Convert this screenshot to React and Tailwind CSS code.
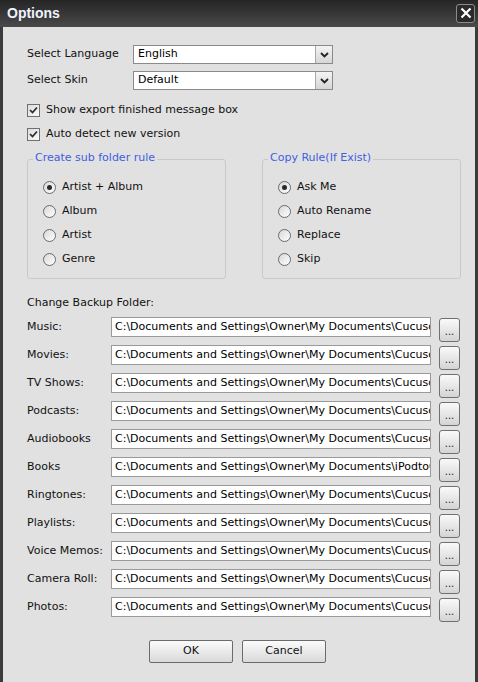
import React from "react";

const FONT = { fontFamily: '"DejaVu Sans", Verdana, sans-serif' };

function Chevron() {
  return (
    <svg width="9" height="6" viewBox="0 0 9 6">
      <path d="M1 1 L4.5 4.5 L8 1" stroke="#222" strokeWidth="1.8" fill="none" />
    </svg>
  );
}

function Select({ value }) {
  return (
    <div className="w-[200px] h-[19px] bg-white border border-[#8a8a8a] flex items-stretch">
      <div className="flex-1 flex items-center pl-[4px] text-[11px] text-black">{value}</div>
      <div className="w-[17px] bg-gradient-to-b from-[#f4f4f4] to-[#d6d6d6] border-l border-[#a8a8a8] flex items-center justify-center">
        <Chevron />
      </div>
    </div>
  );
}

function Checkbox({ label }) {
  return (
    <div className="h-[16px] flex items-center gap-[6px]">
      <div className="w-[13px] h-[13px] border border-[#6f6f6f] bg-gradient-to-br from-[#dcdcdc] to-[#fbfbfb] flex items-center justify-center">
        <svg width="9" height="8" viewBox="0 0 9 8">
          <path d="M1 4 L3.5 6.5 L8 1.5" stroke="#2a2a2a" strokeWidth="1.7" fill="none" />
        </svg>
      </div>
      <span className="text-[11px] text-[#111]">{label}</span>
    </div>
  );
}

function Radio({ label, checked }) {
  return (
    <div className="h-[24px] flex items-center gap-[6px]">
      <div className="w-[13px] h-[13px] rounded-full border border-[#6a6a6a] bg-gradient-to-br from-[#d8d8d8] to-[#ffffff] flex items-center justify-center">
        {checked && <div className="w-[5px] h-[5px] rounded-full bg-[#2a2a2a]" />}
      </div>
      <span className="text-[11px] text-[#111]">{label}</span>
    </div>
  );
}

function Group({ title, items, width, indent }) {
  return (
    <div className="relative h-[128px]" style={{ width }}>
      <div className="absolute left-0 right-0 top-[8px] bottom-0 border border-[#c9c9c9] rounded-[3px]" />
      <div className="absolute left-[6px] top-0 h-[14px] px-[2px] bg-[#e1e1e1] flex items-center text-[11px] text-[#3d5fe0]">
        {title}
      </div>
      <div className="absolute top-[24px] flex flex-col" style={{ left: indent }}>
        {items.map((it, i) => (
          <Radio key={it} label={it} checked={i === 0} />
        ))}
      </div>
    </div>
  );
}

const PATH = "C:\\Documents and Settings\\Owner\\My Documents\\CucusoftiPodtoComputerConverter";
const BOOKS = "C:\\Documents and Settings\\Owner\\My Documents\\iPodtoComputerConverter";

const rows = [
  ["Music:", PATH],
  ["Movies:", PATH],
  ["TV Shows:", PATH],
  ["Podcasts:", PATH],
  ["Audiobooks", PATH],
  ["Books", BOOKS],
  ["Ringtones:", PATH],
  ["Playlists:", PATH],
  ["Voice Memos:", PATH],
  ["Camera Roll:", PATH],
  ["Photos:", PATH],
];

function DotsButton() {
  return (
    <div className="mt-[5px] ml-[8px] w-[21px] h-[24px] rounded-[3px] border border-[#707070] bg-gradient-to-b from-[#fafafa] to-[#d4d4d4] flex items-end justify-center pb-[4px]">
      <span className="text-[10px] leading-[10px] text-[#222]">...</span>
    </div>
  );
}

function Btn({ label }) {
  return (
    <div className="w-[84px] h-[23px] rounded-[2px] border border-[#6b6b6b] bg-gradient-to-b from-[#fbfbfb] to-[#d9d9d9] flex items-center justify-center text-[11px] text-[#111]">
      {label}
    </div>
  );
}

export default function App() {
  return (
    <div className="w-[478px] h-[682px] bg-[#3b3b3b] flex flex-col overflow-hidden" style={FONT}>
      <div className="h-[27px] shrink-0 bg-gradient-to-b from-[#252525] to-[#4a4a4a] flex items-center justify-between pl-[7px] pr-[3px]">
        <span
          className="text-[14px] font-bold text-[#eef3ff]"
          style={{ fontFamily: '"Liberation Sans", Arial, sans-serif' }}
        >
          Options
        </span>
        <div className="w-[19px] h-[19px] rounded-[3px] border border-[#8c8c8c] bg-[#2b2b2b] flex items-center justify-center mb-[1px]">
          <svg width="12" height="12" viewBox="0 0 12 12">
            <path d="M1.5 1.5 L10.5 10.5 M10.5 1.5 L1.5 10.5" stroke="#fff" strokeWidth="2.2" />
          </svg>
        </div>
      </div>
      <div className="flex-1 mx-[3px] bg-[#e1e1e1] pl-[24px] pt-[18px] flex flex-col">
        <div className="flex flex-col gap-[7px]">
          <div className="flex items-center">
            <span className="w-[106px] text-[11px] text-[#111]">Select Language</span>
            <Select value="English" />
          </div>
          <div className="flex items-center">
            <span className="w-[106px] text-[11px] text-[#111]">Select Skin</span>
            <Select value="Default" />
          </div>
        </div>
        <div className="mt-[12px] flex flex-col gap-[8px]">
          <Checkbox label="Show export finished message box" />
          <Checkbox label="Auto detect new version" />
        </div>
        <div className="mt-[9px] flex gap-[36px]">
          <Group
            title="Create sub folder rule"
            items={["Artist + Album", "Album", "Artist", "Genre"]}
            width={199}
            indent={16}
          />
          <Group
            title="Copy Rule(If Exist)"
            items={["Ask Me", "Auto Rename", "Replace", "Skip"]}
            width={199}
            indent={16}
          />
        </div>
        <div className="mt-[16px] h-[16px] flex items-center text-[11px] text-[#111]">Change Backup Folder:</div>
        <div className="mt-[2px] flex flex-col">
          {rows.map(([label, path]) => (
            <div key={label} className="h-[28px] flex items-start">
              <span className="w-[84px] h-[28px] flex items-center text-[11px] text-[#111]">{label}</span>
              <div className="mt-[4px] w-[320px] h-[20px] bg-white border border-[#9a9a9a] flex items-center pl-[3px] overflow-hidden whitespace-nowrap text-[11px] text-black">
                {path}
              </div>
              <DotsButton />
            </div>
          ))}
        </div>
        <div className="mt-[19px] flex gap-[9px] pl-[122px]">
          <Btn label="OK" />
          <Btn label="Cancel" />
        </div>
      </div>
    </div>
  );
}
